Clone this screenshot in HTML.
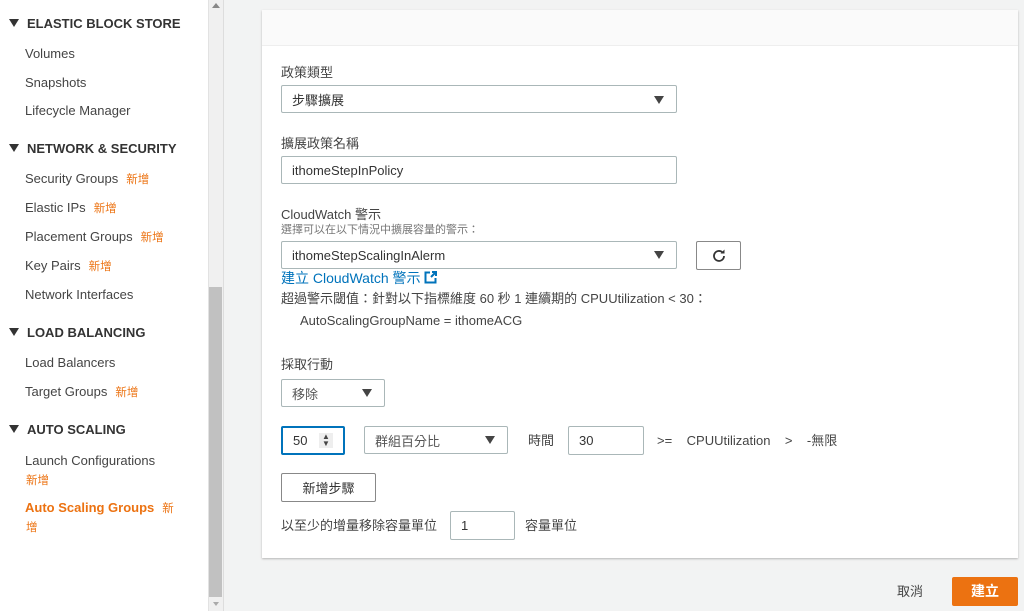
<!DOCTYPE html>
<html><head><meta charset="utf-8"><style>
*{box-sizing:border-box;margin:0;padding:0}
body{width:1024px;height:611px;overflow:hidden;background:#f2f3f3;font-family:"Liberation Sans","Noto Sans CJK TC",sans-serif;font-size:13px;color:#444;position:relative}
.a{position:absolute;white-space:nowrap}
#side{position:absolute;left:0;top:0;width:208px;height:611px;background:#fff}
#sb{position:absolute;left:208px;top:0;width:16px;height:611px;background:#f0f0f0;border-left:1px solid #e2e2e2;border-right:1px solid #ddd}
#th{position:absolute;left:209px;top:287px;width:13px;height:310px;background:#c1c1c1}
.h{font-weight:bold;color:#333;font-size:13px}
.tri{display:inline-block;width:0;height:0;border-left:5px solid transparent;border-right:5px solid transparent;border-top:8px solid #333;margin-right:8px;vertical-align:1px}
.n{color:#ec7211;font-size:11.5px;margin-left:8px}
.it{color:#444}
#panel{position:absolute;left:262px;top:10px;width:756px;height:548px;background:#fff;box-shadow:0 1px 2px rgba(0,0,0,.25)}
#ph{position:absolute;left:0;top:0;width:756px;height:36px;background:#fafafa;border-bottom:1px solid #eee}
.box{position:absolute;border:1px solid #aab7b8;border-radius:2px;background:#fff;padding-left:10px;display:flex;align-items:center;color:#333}
.dd{position:absolute;width:0;height:0;border-left:5px solid transparent;border-right:5px solid transparent;border-top:8px solid #444}
</style></head><body>
<div id="side">
<div class="a h" style="left:9px;top:16px"><span class="tri"></span>ELASTIC BLOCK STORE</div>
<div class="a it" style="left:25px;top:46px">Volumes</div>
<div class="a it" style="left:25px;top:75px">Snapshots</div>
<div class="a it" style="left:25px;top:103px">Lifecycle Manager</div>
<div class="a h" style="left:9px;top:141px"><span class="tri"></span>NETWORK &amp; SECURITY</div>
<div class="a it" style="left:25px;top:171px">Security Groups<span class="n">新增</span></div>
<div class="a it" style="left:25px;top:200px">Elastic IPs<span class="n">新增</span></div>
<div class="a it" style="left:25px;top:229px">Placement Groups<span class="n">新增</span></div>
<div class="a it" style="left:25px;top:258px">Key Pairs<span class="n">新增</span></div>
<div class="a it" style="left:25px;top:287px">Network Interfaces</div>
<div class="a h" style="left:9px;top:325px"><span class="tri"></span>LOAD BALANCING</div>
<div class="a it" style="left:25px;top:355px">Load Balancers</div>
<div class="a it" style="left:25px;top:384px">Target Groups<span class="n">新增</span></div>
<div class="a h" style="left:9px;top:422px"><span class="tri"></span>AUTO SCALING</div>
<div class="a it" style="left:25px;top:453px">Launch Configurations</div>
<div class="a n" style="left:26px;top:472px;margin:0">新增</div>
<div class="a" style="left:25px;top:500px;color:#ec7211;font-weight:bold">Auto Scaling Groups<span class="n" style="font-weight:normal">新</span></div>
<div class="a n" style="left:26px;top:519px;margin:0">增</div>
</div>
<div id="sb"><div class="a" style="left:3px;top:3px;border-left:4px solid transparent;border-right:4px solid transparent;border-bottom:5px solid #888"></div><div class="a" style="left:4px;top:602px;border-left:3px solid transparent;border-right:3px solid transparent;border-top:4px solid #aaa"></div></div>
<div id="th"></div>

<div id="panel"><div id="ph"></div></div>
<div class="a" style="left:281px;top:62px">政策類型</div>
<div class="box" style="left:281px;top:85px;width:396px;height:28px">步驟擴展</div>
<div class="dd" style="left:654px;top:96px"></div>
<div class="a" style="left:281px;top:133px">擴展政策名稱</div>
<div class="box" style="left:281px;top:156px;width:396px;height:28px">ithomeStepInPolicy</div>
<div class="a" style="left:281px;top:204px">CloudWatch 警示</div>
<div class="a" style="left:281px;top:221px;font-size:11px;color:#777">選擇可以在以下情況中擴展容量的警示：</div>
<div class="box" style="left:281px;top:241px;width:396px;height:28px">ithomeStepScalingInAlerm</div>
<div class="dd" style="left:654px;top:251px"></div>
<div class="box" style="left:696px;top:241px;width:45px;height:29px;padding:0;justify-content:center;border-color:#888">
<svg width="16" height="16" viewBox="0 0 16 16"><path d="M13 8a5 5 0 1 1-1.6-3.7" fill="none" stroke="#333" stroke-width="1.8"/><path d="M13.5 1.5v4h-4z" fill="#333"/></svg></div>
<div class="a" style="left:281px;top:268px;color:#0073bb;font-size:14px">建立 CloudWatch 警示 <svg width="13" height="13" viewBox="0 0 13 13" style="vertical-align:-1px"><path d="M6 1.5H1.5v10h10V7" fill="none" stroke="#0073bb" stroke-width="2"/><path d="M7 6l5-5M8 1h4v4" fill="none" stroke="#0073bb" stroke-width="2"/></svg></div>
<div class="a" style="left:281px;top:288px">超過警示閾值：針對以下指標維度 60 秒 1 連續期的 CPUUtilization &lt; 30：</div>
<div class="a" style="left:300px;top:313px">AutoScalingGroupName = ithomeACG</div>
<div class="a" style="left:281px;top:354px">採取行動</div>
<div class="box" style="left:281px;top:379px;width:104px;height:28px;color:#555">移除</div>
<div class="dd" style="left:362px;top:389px"></div>
<div class="box" style="left:281px;top:426px;width:64px;height:29px;border:2px solid #0073bb">50</div>
<div class="a" style="left:319px;top:433px;width:14px;height:15px;background:#eee;font-size:8px;line-height:7px;text-align:center;color:#444">▲<br>▼</div>
<div class="box" style="left:364px;top:426px;width:144px;height:28px;color:#555">群組百分比</div>
<div class="dd" style="left:485px;top:436px"></div>
<div class="a" style="left:528px;top:430px">時間</div>
<div class="box" style="left:568px;top:426px;width:76px;height:29px">30</div>
<div class="a" style="left:657px;top:430px">&gt;=&nbsp;&nbsp;&nbsp;&nbsp;CPUUtilization&nbsp;&nbsp;&nbsp;&nbsp;&gt;&nbsp;&nbsp;&nbsp;&nbsp;-無限</div>
<div class="box" style="left:281px;top:473px;width:95px;height:29px;padding:0;justify-content:center;border-color:#888">新增步驟</div>
<div class="a" style="left:281px;top:515px">以至少的增量移除容量單位</div>
<div class="box" style="left:450px;top:511px;width:65px;height:29px">1</div>
<div class="a" style="left:525px;top:515px">容量單位</div>
<div class="a" style="left:897px;top:581px">取消</div>
<div class="a" style="left:952px;top:577px;width:66px;height:29px;background:#ec7211;border-radius:2px;color:#fff;font-weight:bold;font-size:14px;text-align:center;line-height:29px">建立</div>
</body></html>
